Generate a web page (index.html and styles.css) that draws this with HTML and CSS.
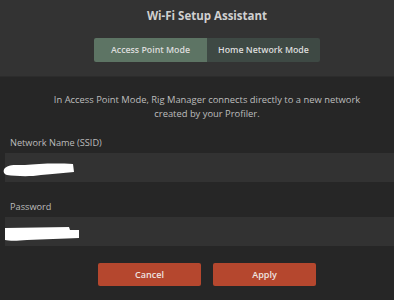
FILE: index.html
```html
<!DOCTYPE html>
<html lang="en">
<head>
  <meta charset="UTF-8">
  <title>Wi-Fi Setup Assistant</title>
  <link rel="stylesheet" href="styles.css">
</head>
<body>
  <div class="header">
    <h1 class="centered">Wi-Fi Setup Assistant</h1>
    <div class="mode-toggle centered">
      <button class="mode active">Access Point Mode</button>
      <button class="mode">Home Network Mode</button>
    </div>
  </div>

  <div class="content">
    <div class="centered">
      <p class="description">In Access Point Mode, Rig Manager connects directly to a new network created by your Profiler.</p>
    </div>

    <div class="field">
      <label>Network Name (SSID)</label>
      <div class="input">
        <svg class="redact" width="72" height="16" viewBox="0 0 72 16">
          <path d="M2 6 C6 2 14 3 22 3 C34 2 50 1 70 2 L71 10 C60 11 50 12 38 13 C26 15 12 14 4 13 C0 12 0 8 2 6 Z" fill="#fff"/>
        </svg>
      </div>
    </div>

    <div class="field">
      <label>Password</label>
      <div class="input">
        <svg class="redact" width="76" height="18" viewBox="0 0 76 18">
          <path d="M2 3 L66 2 L67 5 L76 5 L76 13 C60 14 40 14 24 15 C14 16 6 16 2 15 Z" fill="#fff"/>
        </svg>
      </div>
    </div>

    <div class="actions centered">
      <button class="btn">Cancel</button>
      <button class="btn">Apply</button>
    </div>
  </div>
</body>
</html>
```

FILE: styles.css
```css
body {
  margin: 0;
  background-color: #262626;
  font-family: "Open Sans", "Noto Sans", sans-serif;
  color: #c8c8c8;
  overflow: hidden;
}

.centered {
  padding-left: 20px;
}

.header {
  height: 77px;
  background-color: #333333;
  box-sizing: border-box;
  padding-top: 7px;
  border-bottom: 1px solid #2c2c2c;
}

h1 {
  margin: 0;
  text-align: center;
  font-size: 11.5px;
  font-weight: 700;
  line-height: 18px;
  color: #d0d0d0;
}

.mode-toggle {
  display: flex;
  justify-content: center;
  margin-top: 13px;
}

.mode {
  width: 113px;
  height: 24px;
  border: none;
  padding: 0;
  font-family: inherit;
  font-size: 8.8px;
  font-weight: 600;
  color: #dcdcdc;
  background-color: #3e4944;
}

.mode.active {
  background-color: #5d7464;
  border-radius: 2px 0 0 2px;
}

.mode:last-child {
  border-radius: 0 2px 2px 0;
}

.content {
  padding-top: 16px;
}

.description {
  margin: 0 auto;
  width: 330px;
  text-align: center;
  font-size: 9.4px;
  line-height: 14px;
  color: #bdbdbd;
}

.field {
  margin-top: 15px;
  padding-left: 5px;
}

.field + .field {
  margin-top: 18px;
}

label {
  display: block;
  padding-left: 5px;
  font-size: 9.2px;
  line-height: 14px;
  color: #bcbcbc;
  margin-bottom: 3px;
}

.input {
  height: 29px;
  background-color: #323232;
  display: flex;
  align-items: center;
}

.redact {
  margin-left: -2px;
  margin-top: 4px;
}

.actions {
  display: flex;
  justify-content: center;
  gap: 12px;
  margin-top: 17px;
}

.btn {
  width: 103px;
  height: 23px;
  border: none;
  border-radius: 2px;
  background-color: #b5472e;
  color: #efe4e0;
  font-family: inherit;
  font-size: 9px;
  font-weight: 600;
}
```
